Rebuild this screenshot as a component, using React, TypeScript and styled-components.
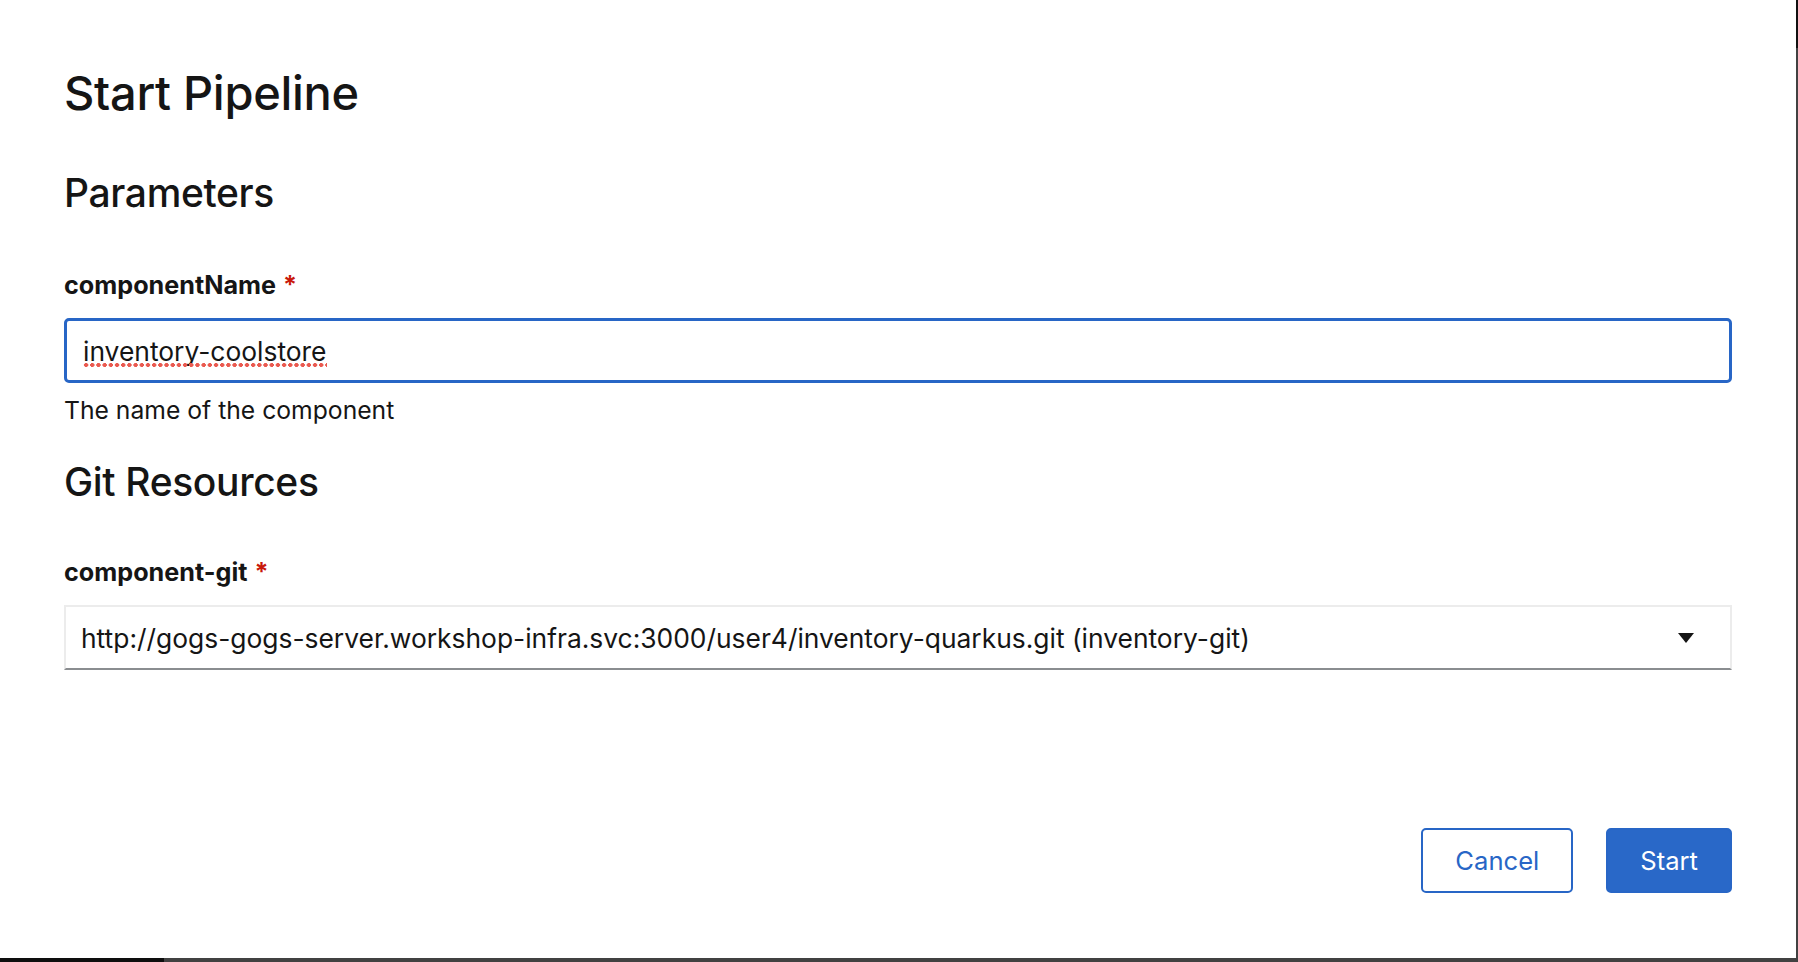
import React from "react";
import styled, { createGlobalStyle } from "styled-components";

const GlobalStyle = createGlobalStyle`
  html, body {
    margin: 0;
    padding: 0;
    height: 100%;
    overflow: hidden;
  }
  body {
    font-family: Inter, "Noto Sans", "Liberation Sans", sans-serif;
    color: #151515;
    background: #444444;
  }
  * { box-sizing: border-box; }
`;

const Page = styled.div`
  position: relative;
  width: 100vw;
  height: 100vh;
  display: grid;
  grid-template-rows: 48px 1fr;
  grid-template-columns: 164px 1fr;
  background: #434343;
`;

const Masthead = styled.div`
  grid-column: 1 / -1;
  background: #111111;
`;

const Sidebar = styled.div`
  background: #0e0e0e;
`;

const Backdrop = styled.div`
  background: #414141;
`;

const Modal = styled.div`
  position: absolute;
  top: 0;
  left: 0;
  right: 2px;
  bottom: 4px;
  background: #ffffff;
  display: flex;
  flex-direction: column;
  padding: 66px 64px 65px 64px;
`;

const Title = styled.h1`
  margin: 0;
  font-family: Inter, "Noto Sans", sans-serif;
  font-weight: 500;
  font-size: 47px;
  line-height: 54px;
  letter-spacing: -0.3px;
  color: #151515;
`;

const SectionTitle = styled.h2<{ $gap: number }>`
  margin: ${(p) => p.$gap}px 0 0 0;
  font-family: Inter, "Noto Sans", sans-serif;
  font-weight: 500;
  font-size: 39px;
  line-height: 46px;
  letter-spacing: -0.35px;
  color: #151515;
`;

const Field = styled.div<{ $gap: number }>`
  margin-top: ${(p) => p.$gap}px;
  display: flex;
  flex-direction: column;
`;

const Label = styled.label`
  font-weight: 700;
  font-size: 25.2px;
  line-height: 38px;
  color: #151515;
  margin-bottom: 14px;
`;

const Required = styled.span`
  color: #c9190b;
  margin-left: 7px;
  font-weight: 700;
`;

const InputWrap = styled.div`
  position: relative;
  height: 65px;
`;

const TextInput = styled.input`
  height: 65px;
  width: 100%;
  border: 3px solid #2866c6;
  border-radius: 5px;
  padding: 0 16px;
  font-family: Inter, "Noto Sans", sans-serif;
  font-size: 26.4px;
  color: #151515;
  background: #ffffff;
  outline: none;
`;

/* spell-check squiggle drawn over the input text */
const SpellMark = styled.span`
  position: absolute;
  left: 19px;
  top: 0;
  height: 65px;
  display: flex;
  align-items: center;
  font-family: Inter, "Noto Sans", sans-serif;
  font-size: 26.4px;
  color: transparent;
  pointer-events: none;
  white-space: pre;
  background-image: radial-gradient(circle, #ea5a50 1.9px, transparent 2.3px);
  background-size: 6.2px 6px;
  background-repeat: repeat-x;
  background-position: 0 44px;
`;

const HelperText = styled.div`
  margin-top: 9px;
  font-size: 24.7px;
  line-height: 37px;
  color: #151515;
`;

const SelectBox = styled.div`
  height: 65px;
  display: flex;
  align-items: center;
  justify-content: space-between;
  border: 2px solid #ececec;
  border-bottom-color: #8a8d90;
  padding: 0 36px 0 15px;
  font-size: 26.4px;
  color: #151515;
  background: #ffffff;
`;

const SelectText = styled.span`
  white-space: nowrap;
`;

const Caret = styled.svg`
  width: 16px;
  height: 10px;
  flex: none;
`;

const Footer = styled.div`
  margin-top: auto;
  display: flex;
  justify-content: flex-end;
  gap: 33px;
`;

const Button = styled.button<{ $primary?: boolean }>`
  height: 65px;
  padding: 0 32px;
  border-radius: 5px;
  font-family: Inter, "Noto Sans", sans-serif;
  font-size: 25.6px;
  font-weight: 400;
  cursor: pointer;
  border: 2px solid #2866c6;
  background: ${(p) => (p.$primary ? "#2968c8" : "#ffffff")};
  color: ${(p) => (p.$primary ? "#ffffff" : "#2866c6")};
`;

export default function App() {
  const value = "inventory-coolstore";
  return (
    <>
      <GlobalStyle />
      <Page>
        <Masthead />
        <Sidebar />
        <Backdrop />
        <Modal>
          <Title>Start Pipeline</Title>
          <SectionTitle $gap={50}>Parameters</SectionTitle>
          <Field $gap={50}>
            <Label>
              componentName<Required>*</Required>
            </Label>
            <InputWrap>
              <TextInput defaultValue={value} spellCheck={false} />
              <SpellMark aria-hidden="true">{value}</SpellMark>
            </InputWrap>
            <HelperText>The name of the component</HelperText>
          </Field>
          <SectionTitle $gap={30}>Git Resources</SectionTitle>
          <Field $gap={48}>
            <Label>
              component-git<Required>*</Required>
            </Label>
            <SelectBox>
              <SelectText>
                http://gogs-gogs-server.workshop-infra.svc:3000/user4/inventory-quarkus.git (inventory-git)
              </SelectText>
              <Caret viewBox="0 0 16 10">
                <polygon points="0,0 16,0 8,10" fill="#151515" />
              </Caret>
            </SelectBox>
          </Field>
          <Footer>
            <Button>Cancel</Button>
            <Button $primary>Start</Button>
          </Footer>
        </Modal>
      </Page>
    </>
  );
}
